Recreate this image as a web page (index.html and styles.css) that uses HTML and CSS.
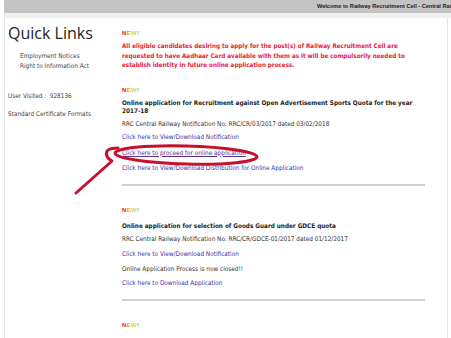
FILE: index.html
```html
<!DOCTYPE html>
<html>
<head>
<meta charset="utf-8">
<link rel="stylesheet" href="styles.css">
</head>
<body>
<div class="topbar">Welcome to Railway Recruitment Cell - Central Railway, Mumbai</div>
<div class="band"></div>
<div class="page">
  <aside class="sidebar">
    <h1 class="ql">Quick Links</h1>
    <ul class="qlist">
      <li>Employment Notices</li>
      <li>Right to Information Act</li>
    </ul>
    <p class="visits">User Visited :&nbsp; 928136</p>
    <p class="std">Standard Certificate Formats</p>
  </aside>
  <main class="content">
    <section class="item first">
      <div class="new"><span class="n1">N</span><span class="n2">E</span><span class="n3">W</span><span class="n4">!</span></div>
      <p class="alert">All eligible candidates desiring to apply for the post(s) of Railway Recruitment Cell are requested to have Aadhaar Card available with them as it will be compulsorily needed to establish identity in future online application process.</p>
    </section>
    <section class="item second">
      <div class="new"><span class="n1">N</span><span class="n2">E</span><span class="n3">W</span><span class="n4">!</span></div>
      <p class="title">Online application for Recruitment against Open Advertisement Sports Quota for the year 2017-18</p>
      <p class="txt m3">RRC Central Railway Notification No. RRC/CR/03/2017 dated 03/02/2018</p>
      <p class="lnk m3"><a>Click here to View/Download Notification</a></p>
      <p class="lnk m6"><a class="visited">Click here to proceed for online application</a></p>
      <p class="lnk m5"><a>Click here to View/Download Distribution for Online Application</a></p>
      <hr class="sep">
    </section>
    <section class="item">
      <div class="new"><span class="n1">N</span><span class="n2">E</span><span class="n3">W</span><span class="n4">!</span></div>
      <p class="title t2">Online application for selection of Goods Guard under GDCE quota</p>
      <p class="txt m4">RRC Central Railway Notification No. RRC/CR/GDCE-01/2017 dated 01/12/2017</p>
      <p class="lnk m5"><a>Click here to View/Download Notification</a></p>
      <p class="txt m5">Online Application Process is now closed!!</p>
      <p class="lnk m4"><a>Click here to Download Application</a></p>
      <hr class="sep">
    </section>
    <section class="item">
      <div class="new"><span class="n1">N</span><span class="n2">E</span><span class="n3">W</span><span class="n4">!</span></div>
    </section>
  </main>
</div>
<svg class="mark" width="451" height="338" viewBox="0 0 451 338">
  <ellipse cx="186" cy="155" rx="71" ry="9" fill="none" stroke="#c8102e" stroke-width="3" transform="rotate(1.5 186 155)"/>
  <path d="M76,193 L112,161 C105,157 104,150 112,148.5 L118,148" fill="none" stroke="#c8102e" stroke-width="3" stroke-linecap="round" stroke-linejoin="round"/>
</svg>
</body>
</html>
```
FILE: styles.css
```css
html, body {
  margin: 0;
  padding: 0;
  background: #ffffff;
  width: 451px;
  height: 338px;
  overflow: hidden;
  position: relative;
}
body {
  font-family: "DejaVu Sans Condensed", "DejaVu Sans", sans-serif;
  color: #333;
}
.topbar {
  margin-left: 4px;
  height: 13px;
  background: #c3c3c3;
  font-family: "Liberation Sans", Arial, sans-serif;
  font-size: 5.6px;
  font-weight: bold;
  color: #222;
  line-height: 13px;
  white-space: nowrap;
  padding-left: 313px;
  overflow: hidden;
}
.band {
  margin-left: 4px;
  height: 5px;
  background: #efefef;
}
.page {
  display: flex;
  margin-left: 4px;
  margin-right: 3px;
  border-left: 1px solid #e4e4e4;
  border-right: 1px solid #e4e4e4;
  height: 320px;
}
.sidebar {
  width: 112px;
  flex: none;
  padding-left: 3px;
  box-sizing: border-box;
}
.ql {
  font-family: "Open Sans", sans-serif;
  font-weight: normal;
  font-size: 16px;
  color: #222;
  margin: 4px 0 0 0;
  line-height: 22px;
}
.qlist {
  list-style: none;
  margin: 7px 0 0 0;
  padding-left: 12px;
  font-size: 6.4px;
  line-height: 10px;
  color: #444;
}
.visits, .std {
  font-size: 6.4px;
  color: #444;
  margin: 0;
  line-height: 10px;
}
.visits { margin-top: 20px; }
.std { margin-top: 8px; }
.content {
  flex: 1;
  padding-left: 5px;
  padding-right: 22px;
}
.item {
  padding-top: 20px;
}
.item.first {
  padding-top: 11px;
}
.item.second {
  padding-top: 16px;
}
.new {
  font-family: "Liberation Sans", Arial, sans-serif;
  font-size: 6px;
  font-weight: bold;
  line-height: 8px;
  height: 8px;
  letter-spacing: 0.3px;
}
.n1 { color: #e8132a; }
.n2 { color: #f59a1c; }
.n3 { color: #e4d21a; }
.n4 { color: #7cc22a; }
.alert {
  margin: 4px 0 0 0;
  color: #e8213a;
  font-weight: bold;
  font-size: 6.25px;
  line-height: 9.5px;
}
.title {
  margin: 5px 0 0 0;
  font-weight: bold;
  font-size: 6.35px;
  line-height: 8.5px;
  color: #222;
}
.title.t2 {
  margin-top: 8px;
}
.txt {
  margin: 4px 0 0 0;
  font-size: 6.4px;
  line-height: 10px;
  color: #333;
}
.lnk {
  margin: 4px 0 0 0;
  font-size: 6.4px;
  line-height: 10px;
}
.m3 { margin-top: 3px; }
.m4 { margin-top: 4px; }
.m5 { margin-top: 5px; }
.m6 { margin-top: 6px; }
.lnk a {
  color: #3434b0;
}
.lnk a.visited {
  color: #5a2e8e;
  text-decoration: underline;
}
.sep {
  margin: 11px 0 0 0;
  border: none;
  height: 2px;
  background: #cfcfcf;
}
.mark {
  position: absolute;
  left: 0;
  top: 0;
  pointer-events: none;
}
```
